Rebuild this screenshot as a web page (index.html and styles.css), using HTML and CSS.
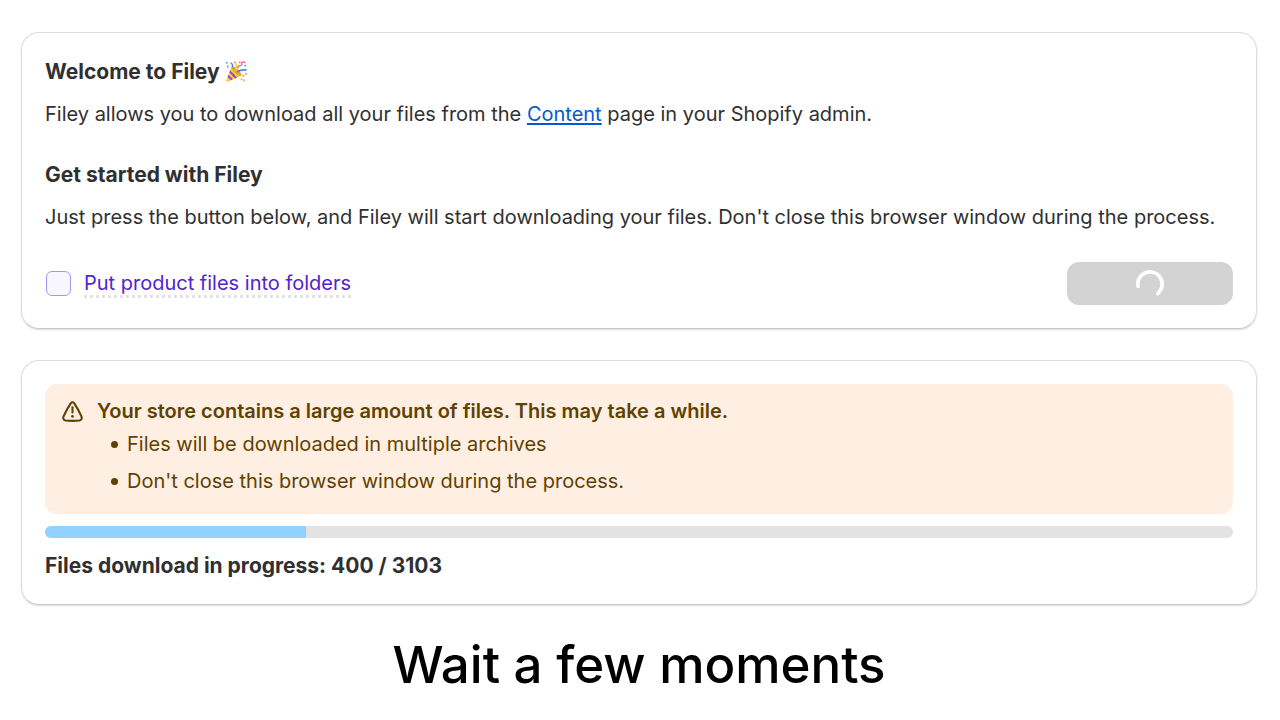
FILE: index.html
```
<!DOCTYPE html>
<html lang="en">
<head>
    <meta charset="UTF-8">
    <meta name="viewport" content="width=device-width, initial-scale=1.0">
    <title>Filey</title>
    <link rel="stylesheet" href="styles.css">
</head>
<body>
    <main class="page">
        <section class="card">
            <h2 class="heading">Welcome to Filey
                <svg class="popper" viewBox="0 0 24 24" aria-hidden="true">
                    <path d="M7 6 L18 16 L3 22.500 Q1 23 1.500 21 Z" fill="#fbc83f"/>
                    <path d="M5.500 10 L13 18 L11 19 L5 12.500 Z M3.700 15 L8.500 20 L6.500 20.800 L3 17.500 Z" fill="#9340d4"/>
                    <ellipse cx="12.500" cy="11" rx="2.500" ry="7" transform="rotate(-46 12.500 11)" fill="#e5a52c"/>
                    <path d="M11 11 Q14 7 12 3" fill="none" stroke="#f9cb45" stroke-width="2"/>
                    <path d="M13 12 Q18 9 23.500 10" fill="none" stroke="#4c86e8" stroke-width="1.800"/>
                    <path d="M6 2 Q9 3 8 7" fill="none" stroke="#4c86e8" stroke-width="1.500"/>
                    <path d="M14 8 Q14 5 17 5 Q19 5 18 2 Q20 0 22 2" fill="none" stroke="#f4688a" stroke-width="1.500"/>
                    <g fill="#4c86e8"><circle cx="2" cy="2" r="1"/><circle cx="3" cy="6" r="1"/><circle cx="22" cy="5" r="1"/></g>
                    <g fill="#f4688a"><circle cx="11" cy="1.500" r="1"/><circle cx="16" cy="1.500" r="1"/><circle cx="23" cy="14" r="1"/></g>
                    <g fill="#f4a13c"><circle cx="20" cy="16" r="1.200"/><circle cx="18" cy="20" r="1"/><circle cx="21" cy="21" r="1"/></g>
                </svg>
            </h2>
            <p class="text">Filey allows you to download all your files from the <a href="#">Content</a> page in your Shopify admin.</p>

            <h2 class="heading heading-spaced">Get started with Filey</h2>
            <p class="text">Just press the button below, and Filey will start downloading your files. Don't close this browser window during the process.</p>

            <div class="actions">
                <div class="option">
                    <input type="checkbox" id="folders" class="checkbox">
                    <label for="folders" class="option-label">Put product files into folders</label>
                </div>
                <button type="button" class="button" aria-label="Downloading" disabled>
                    <svg class="spinner" viewBox="0 0 30 30" aria-hidden="true">
                        <path d="M3 17.500 A12.200 12.200 0 1 1 22.800 24.500" fill="none" stroke="#fff" stroke-width="3.600" stroke-linecap="round"/>
                    </svg>
                </button>
            </div>
        </section>

        <section class="card">
            <div class="banner">
                <svg class="warning" viewBox="0 0 20 20" aria-hidden="true">
                    <path d="M8.300 2.200 Q10 0.200 11.700 2.200 Q15.900 8.400 18.500 14.700 Q19.600 17.900 16.600 18.600 Q10 19.200 3.400 18.600 Q0.400 17.900 1.500 14.700 Q4.100 8.400 8.300 2.200 Z" fill="none" stroke="#5e4200" stroke-width="2"/>
                    <path d="M10 6 V11" stroke="#5e4200" stroke-width="2" stroke-linecap="round"/>
                    <circle cx="10" cy="14.600" r="1.300" fill="#5e4200"/>
                </svg>
                <div>
                    <h2 class="banner-title">Your store contains a large amount of files. This may take a while.</h2>
                    <ul class="banner-list">
                        <li>Files will be downloaded in multiple archives</li>
                        <li>Don't close this browser window during the process.</li>
                    </ul>
                </div>
            </div>
            <div class="progress" role="progressbar" aria-valuenow="22" aria-valuemin="0" aria-valuemax="100" aria-label="Files download">
                <div class="progress-bar" style="width: 22%"></div>
            </div>
            <p class="status">Files download in progress: 400 / 3103</p>
        </section>

        <h1 class="caption">Wait a few moments</h1>
    </main>
</body>
</html>
```
FILE: styles.css
```
* {
    box-sizing: border-box;
}
body {
    margin: 0;
    background-color: #fff;
    color: #303030;
    font-family: Inter, "Liberation Sans", sans-serif;
    font-size: 20px;
    line-height: 30px;
}
h1, h2, p, ul {
    margin: 0;
}
.page {
    display: flex;
    flex-direction: column;
    gap: 31px;
    padding: 32px 23px 0 21px;
}
.card {
    padding: 23px;
    border: 1px solid #dcdcdc;
    border-bottom-color: #c8c8c8;
    border-radius: 18px;
    box-shadow: 0 1px 2px rgba(0, 0, 0, 0.14);
}
.heading {
    display: flex;
    align-items: center;
    gap: 5px;
    margin-bottom: 12px;
    padding-top: 1px;
    font-size: 21px;
    font-weight: 650;
}
.heading-spaced {
    margin-top: 30px;
}
.popper {
    width: 22px;
    height: 22px;
}
a {
    color: #005bd3;
    text-underline-offset: 2px;
}
.actions {
    display: flex;
    align-items: center;
    justify-content: space-between;
    margin-top: 30px;
}
.option {
    display: flex;
    align-items: center;
    gap: 13px;
    padding-left: 1px;
}
.checkbox {
    appearance: none;
    width: 25px;
    height: 25px;
    margin: 0;
    border: 1px solid #a893f5;
    border-radius: 6px;
    background-color: #f8f7ff;
}
.option-label {
    padding-top: 2px;
    border-bottom: 3px dotted #e3e3e3;
    color: #5323cf;
    line-height: 24px;
}
.button {
    display: flex;
    align-items: center;
    justify-content: center;
    width: 166px;
    height: 43px;
    padding: 0;
    border: none;
    border-radius: 12px;
    background-color: #d3d3d3;
}
.spinner {
    width: 30px;
    height: 30px;
}
.banner {
    display: flex;
    gap: 14px;
    padding: 12px 17px 18px;
    border-radius: 12px;
    background-color: #ffeee2;
    color: #5e4200;
}
.warning {
    flex: none;
    width: 21px;
    height: 21px;
    margin-top: 5px;
}
.banner-title {
    font-size: 20px;
    font-weight: 600;
}
.banner-list {
    display: flex;
    flex-direction: column;
    gap: 7px;
    margin-top: 3px;
    padding-left: 14px;
    list-style: none;
}
.banner-list li {
    display: flex;
    align-items: center;
    gap: 9px;
}
.banner-list li::before {
    content: "";
    width: 7px;
    height: 7px;
    border-radius: 50%;
    background-color: #5e4200;
}
.progress {
    height: 12px;
    margin: 12px 0 13px;
    border-radius: 6px;
    background-color: #e3e3e3;
    overflow: hidden;
}
.progress-bar {
    height: 100%;
    background-color: #91d0ff;
}
.status {
    font-size: 21px;
    font-weight: 650;
}
.caption {
    color: #000;
    font-size: 51px;
    font-weight: 500;
    line-height: 58px;
    text-align: center;
}
```
